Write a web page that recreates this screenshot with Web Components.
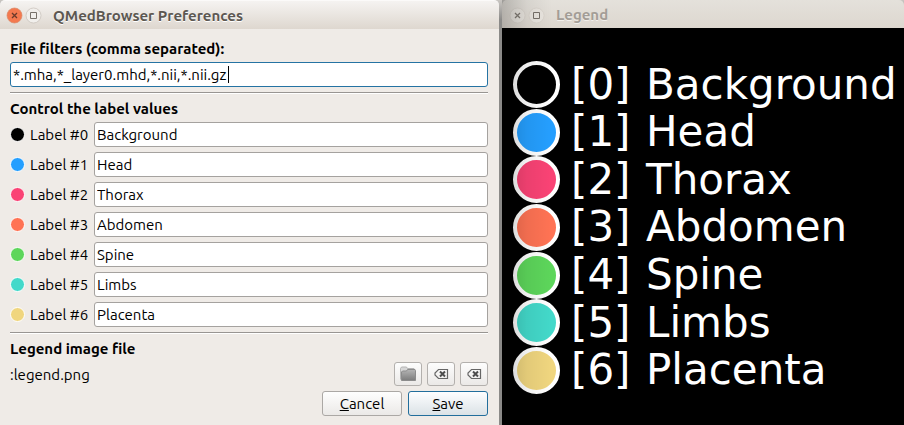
<!DOCTYPE html>
<html lang="en">
<head>
<meta charset="utf-8">
<title>QMedBrowser Preferences</title>
<style>
  html, body { height: 100%; }
  body { margin: 0; background: #8b8a88; font: 15px/17px Ubuntu, "Noto Sans", sans-serif; color: #000; }
</style>
</head>
<body>
<desk-top></desk-top>

<script>
const LABELS = [
  ["Background", "#000000"],
  ["Head", "#259fff"],
  ["Thorax", "#fa4375"],
  ["Abdomen", "#ff7354"],
  ["Spine", "#5dd65b"],
  ["Limbs", "#43d9ca"],
  ["Placenta", "#f0d67f"]
];

class BaseElement extends HTMLElement {
  connectedCallback() {
    if (!this.shadowRoot) this.attachShadow({ mode: "open" }).innerHTML = this.render();
  }
}

/* Window frame: title bar with close and maximise buttons, and the body in a slot. */
customElements.define("app-window", class extends BaseElement {
  render() {
    const on = this.hasAttribute("active");
    return `<style>
      :host { display: flex; flex-direction: column; min-width: 0; min-height: 0; }
      header { display: flex; align-items: center; gap: 4px; box-sizing: border-box; height: 28px; padding: 2px 8px 0;
        border-radius: 5px 5px 0 0; background: linear-gradient(#e4e1db, #ddd7cf); }
      :host([active]) header { height: 29px; padding: 1px 7px 0; border-top: 1px solid #fbfaf9; background: linear-gradient(#f5f3f1, #ded7cf); }
      button { width: 15px; height: 15px; padding: 0; border: 0; background: none; }
      svg { display: block; width: 15px; height: 15px; overflow: visible; }
      h1 { margin: 0 0 0 8px; font-size: 15px; line-height: 18px; font-weight: 700; white-space: nowrap;
        color: #a39d96; text-shadow: 0 1px 0 #f3f0ec; }
      :host([active]) h1 { color: #5c5751; text-shadow: 0 1px 0 #fff; }
      main { flex: 1; display: grid; min-height: 0; }
    </style>
    <header>
      <button type="button" aria-label="Close"><svg viewBox="0 0 15 15">
        <circle cx="7.5" cy="7.5" r="7.500" fill="${on ? "#f4794f" : "#e9e5df"}" stroke="${on ? "#d98a69" : "#d6d0c8"}" stroke-width=".7"/>
        <path d="M5 5l5 5M10 5l-5 5" stroke="${on ? "#6b3a2a" : "#817b74"}" stroke-width="1.3"/></svg></button>
      <button type="button" aria-label="Maximize"><svg viewBox="0 0 15 15">
        <circle cx="7.5" cy="7.5" r="7.500" fill="${on ? "#f1efec" : "#e9e5df"}" stroke="${on ? "#c5bfb8" : "#d6d0c8"}" stroke-width=".7"/>
        <path d="M4.5 4.5h6v6h-6z" fill="none" stroke="#77716a"/></svg></button>
      <h1>${this.getAttribute("caption")}</h1>
    </header>
    <main><slot></slot></main>`;
  }
});

const FIELD_CSS = `input { box-sizing: border-box; width: 100%; min-width: 0; height: 25px; margin: 0; padding: 0 2px;
  border: 1px solid #a5a29f; border-radius: 3px; background-color: #fff; color: #000; font: inherit; outline: 0; }`;

/* One colour dot, its label and the text box for the label's name. */
customElements.define("label-row", class extends BaseElement {
  render() {
    return `<style>
      :host { display: grid; grid-template-columns: 14px 60px minmax(0, 1fr); column-gap: 5px; align-items: center; }
      i { box-sizing: border-box; width: 15px; height: 15px; border: 1px solid #fff; border-radius: 50%; background: ${this.getAttribute("color")}; }
      label { white-space: nowrap; padding-left: 1px; }
      ${FIELD_CSS}
    </style>
    <i></i><label for="name">Label #${this.getAttribute("index")}</label>
    <input id="name" type="text" value="${this.getAttribute("name")}">`;
  }
});

customElements.define("tool-button", class extends BaseElement {
  render() {
    const icon = this.getAttribute("icon") === "folder"
      ? `<svg viewBox="0 0 18 18"><defs><linearGradient id="g" x2="0" y2="1"><stop offset="0" stop-color="#b5b5b5"/><stop offset="1" stop-color="#7c7c7c"/></linearGradient></defs>
         <path d="M1.5 14.500V3.500l1-1.500h5l1 1.500h6.500v2" fill="#d6d6d6" stroke="#b4b4b4"/>
         <path d="M2.500 15.500V7l1-1h4l1-1.500h7.500l.5 1v10z" fill="url(#g)" stroke="#8c8c8c"/></svg>`
      : `<svg viewBox="0 0 18 18"><path d="M6.500 4.500h9v9h-9l-3.500-3.500v-2z" fill="none" stroke="#666" stroke-width="1.200"/>
         <path d="M8 6.500l5 5M13 6.500l-5 5" stroke="#4d4d4d" stroke-width="2"/></svg>`;
    return `<style>
      :host { display: block; }
      button { display: grid; place-items: center; box-sizing: border-box; width: 28px; height: 24px; padding: 0;
        border: 1px solid #b3b0ad; border-radius: 3px; background: linear-gradient(#fdfdfd, #ebe9e7); }
      svg { display: block; width: 18px; height: 18px; }
    </style>
    <button type="button" aria-label="${this.getAttribute("label")}">${icon}</button>`;
  }
});

customElements.define("push-button", class extends BaseElement {
  render() {
    return `<style>
      :host { display: block; }
      button { box-sizing: border-box; min-width: 80px; height: 25px; padding: 0 8px; border: 1px solid #aba8a5; border-radius: 3px;
        background: linear-gradient(#fefefe, #ebe9e7); color: #000; font: inherit; }
      :host([primary]) button { border-color: #226e9c; background: linear-gradient(#fdfeff, #dbe2e6); }
    </style>
    <button type="button"><slot></slot></button>`;
  }
});

customElements.define("preferences-form", class extends BaseElement {
  render() {
    return `<style>
      :host { display: flex; flex-direction: column; gap: 5px; padding: 11px 11px 9px 10px; background: #efebe7; }
      h2, .title { display: block; margin: 0; font-size: 15px; line-height: 17px; font-weight: 700; white-space: nowrap; }
      ${FIELD_CSS}
      #filters { border-color: #2573a3; background: linear-gradient(#000, #000) 217px 3px / 1px 17px no-repeat #fff; }
      hr { flex: none; width: 100%; height: 1px; margin: 0 0 1px; border: 0; border-top: 1px solid #989592; background: #fff; }
      .rows { display: grid; gap: 5px; }
      .file, .actions { display: flex; align-items: center; gap: 5px; }
      .file output { flex: 1; }
      .actions { justify-content: flex-end; gap: 6px; }
    </style>
    <label class="title" for="filters">File filters (comma separated):</label>
    <input id="filters" type="text" value="*.mha,*_layer0.mhd,*.nii,*.nii.gz">
    <hr>
    <h2>Control the label values</h2>
    <div class="rows">${LABELS.map(([n, c], i) => `<label-row index="${i}" name="${n}" color="${c}"></label-row>`).join("")}</div>
    <hr>
    <h2>Legend image file</h2>
    <div class="file"><output>:legend.png</output>
      <tool-button icon="folder" label="Open image"></tool-button>
      <tool-button icon="clear" label="Clear image"></tool-button>
      <tool-button icon="clear" label="Reset image"></tool-button></div>
    <div class="actions"><push-button><u>C</u>ancel</push-button><push-button primary><u>S</u>ave</push-button></div>`;
  }
});

customElements.define("legend-item", class extends BaseElement {
  render() {
    return `<style>
      :host { display: grid; grid-template-columns: 47px 59px minmax(0, 1fr); align-items: center; min-height: 0; }
      svg { display: block; width: 47px; height: 47px; }
      span { font-size: 42px; line-height: 46px; white-space: nowrap; }
      .index { margin-left: 11px; }
      .name { margin-left: 27px; }
    </style>
    <svg viewBox="0 0 47 47"><circle cx="23.500" cy="23.500" r="21.500" fill="${this.getAttribute("color")}" stroke="#fff" stroke-width="4"/></svg>
    <span class="index">[${this.getAttribute("index")}]</span><span class="name">${this.getAttribute("name")}</span>`;
  }
});

customElements.define("legend-view", class extends BaseElement {
  render() {
    return `<style>
      :host { display: grid; grid-auto-rows: minmax(0, 1fr); padding: 33px 0 31px 11px; background: #000; color: #fff;
        font-family: "DejaVu Sans", sans-serif; overflow: hidden; }
    </style>${LABELS.map(([n, c], i) => `<legend-item index="${i}" name="${n}" color="${c}"></legend-item>`).join("")}`;
  }
});

customElements.define("desk-top", class extends BaseElement {
  render() {
    return `<style>
      :host { display: grid; grid-template-columns: minmax(0, 499fr) minmax(0, 402fr); column-gap: 3px; min-height: 100%; height: 100%;
        background: linear-gradient(#c9c6c2, #8b8a88 20px); }
      .back { position: relative; }
      .back::after { content: ""; position: absolute; inset: 0 auto 0 0; width: 50px; pointer-events: none;
        background: linear-gradient(90deg, rgba(0,0,0,.2), rgba(0,0,0,.06) 50%, transparent); }
    </style>
    <app-window active caption="QMedBrowser Preferences"><preferences-form></preferences-form></app-window>
    <app-window class="back" caption="Legend"><legend-view></legend-view></app-window>`;
  }
});
</script>
</body>
</html>
